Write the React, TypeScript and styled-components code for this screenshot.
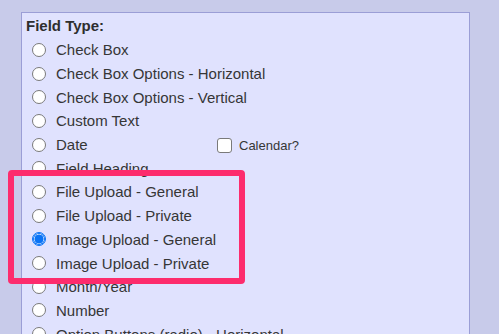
import React from "react";
import styled, { createGlobalStyle } from "styled-components";

const Global = createGlobalStyle`
  html, body { margin: 0; padding: 0; }
  body {
    background: #c8cbea;
    font-family: "Liberation Sans", Arial, Helvetica, sans-serif;
    width: 499px;
    height: 334px;
    overflow: hidden;
    position: relative;
  }
`;

const Panel = styled.div`
  margin: 12px 0 0 21px;
  padding-top: 1px;
  width: 447px;
  height: 330px;
  border: 1px solid #9b9ed6;
  background: #e0e2fe;
  color: #363636;
  overflow: hidden;
`;

const Heading = styled.div`
  font-weight: bold;
  font-size: 15px;
  line-height: 24px;
  padding-left: 4px;
  color: #2e2e2e;
`;

const Row = styled.label`
  display: grid;
  grid-template-columns: 185px auto;
  align-items: center;
  height: 23.7px;
  padding-left: 10px;
  font-size: 15px;
`;

const Main = styled.span`
  display: flex;
  align-items: center;
  gap: 10px;
  white-space: nowrap;
`;

const Radio = styled.span<{ $checked?: boolean }>`
  box-sizing: border-box;
  width: 14px;
  height: 14px;
  border-radius: 50%;
  flex: none;
  border: 1px solid ${(p) => (p.$checked ? "#0a73f5" : "#7a7a7a")};
  background: ${(p) =>
    p.$checked
      ? "radial-gradient(circle, #0a73f5 0 4.2px, #ffffff 4.8px 100%)"
      : "#ffffff"};
  ${(p) => (p.$checked ? "box-shadow: inset 0 0 0 1px #0a73f5;" : "")}
`;

const Extra = styled.span`
  display: flex;
  align-items: center;
  gap: 7px;
  font-size: 13px;
  margin-top: 2px;
`;

const Check = styled.span`
  box-sizing: border-box;
  width: 15px;
  height: 15px;
  border: 1px solid #7a7a7a;
  border-radius: 3px;
  background: #ffffff;
`;

const Highlight = styled.div`
  position: absolute;
  left: 8px;
  top: 170px;
  width: 237px;
  height: 114px;
  box-sizing: border-box;
  border: 6px solid #fd2c6d;
  border-radius: 4px;
  pointer-events: none;
`;

const options: { label: string; checked?: boolean; calendar?: boolean }[] = [
  { label: "Check Box" },
  { label: "Check Box Options - Horizontal" },
  { label: "Check Box Options - Vertical" },
  { label: "Custom Text" },
  { label: "Date", calendar: true },
  { label: "Field Heading" },
  { label: "File Upload - General" },
  { label: "File Upload - Private" },
  { label: "Image Upload - General", checked: true },
  { label: "Image Upload - Private" },
  { label: "Month/Year" },
  { label: "Number" },
  { label: "Option Buttons (radio) - Horizontal" },
];

export default function App() {
  return (
    <>
      <Global />
      <Panel>
        <Heading>Field Type:</Heading>
        {options.map((o) => (
          <Row key={o.label}>
            <Main>
              <Radio $checked={o.checked} />
              {o.label}
            </Main>
            {o.calendar ? (
              <Extra>
                <Check />
                Calendar?
              </Extra>
            ) : (
              <span />
            )}
          </Row>
        ))}
      </Panel>
      <Highlight />
    </>
  );
}
